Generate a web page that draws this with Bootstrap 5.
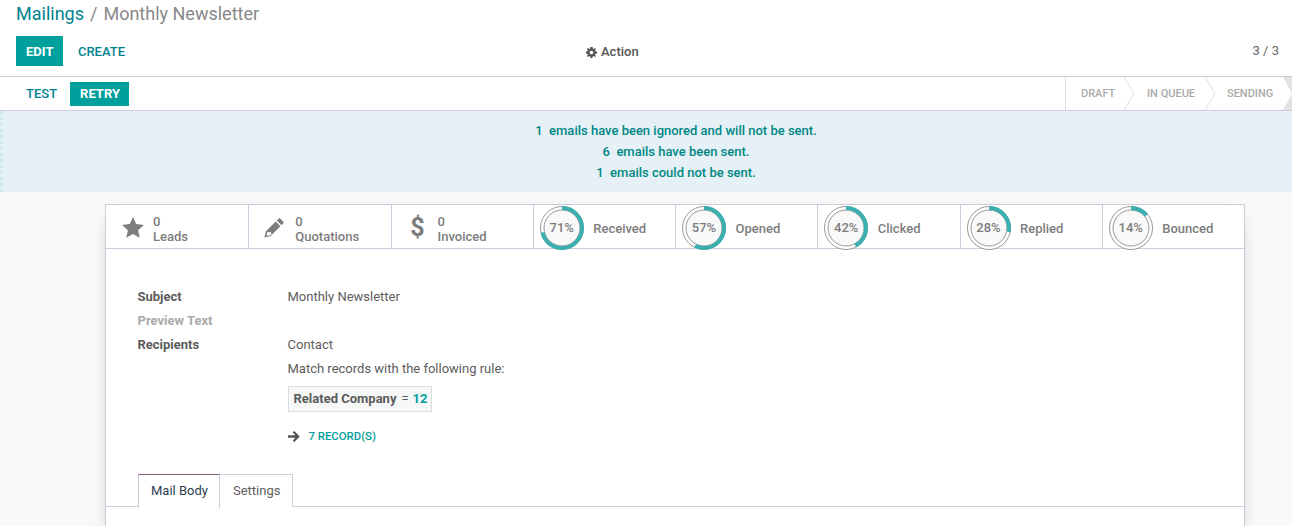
<!DOCTYPE html>
<html lang="en">
<head>
  <meta charset="UTF-8">
  <title>Monthly Newsletter</title>
  <link href="https://cdn.jsdelivr.net/npm/bootstrap@5.3.0/dist/css/bootstrap.min.css" rel="stylesheet">
  <style>
    html, body { height: 526px; overflow: hidden; }
    body { font-family: Roboto, "Liberation Sans", sans-serif; font-size: 13px; line-height: 1.5; color: #5c5c5c; background: #f9f9f9; }
    .teal { color: #00a09d; }

    .panel-top { height: 77px; background: #fff; border-bottom: 1px solid #ccc; padding: 0 13px 0 16px; }
    .crumbs { height: 36px; font-size: 18px; line-height: 28px; color: #888; }
    .crumbs a { color: #00838f; text-decoration: none; }
    .crumbs .sep { margin: 0 6px 0 6px; }
    .panel-btns { height: 30px; }
    .flat-btn { font-size: 13px; font-weight: 500; line-height: 18px; border-radius: 0; border: 0; padding: 7px 10px 5px; text-transform: uppercase; color: #00838f; background: transparent; }
    .flat-btn.on { background: #00a09d; color: #fff; font-weight: 700; }
    .flat-btn.create { padding: 7px 15px 5px 14.500px; }
    .action-slot { left: 570px; top: 7px; font-weight: 500; color: #555; line-height: 18px; }
    .pager-txt { color: #666; padding-top: 5px; }

    .status-row { height: 34px; background: #fff; border-bottom: 1px solid #ccd; padding-left: 16px; }
    .status-row .flat-btn { padding: 3px 10px; line-height: 18px; }
    .status-row .flat-btn.on { margin-left: 3px; padding: 3px 9.500px 3px 10px; }
    .steps { border-left: 1px solid #ddd; height: 33px; }
    .step { position: relative; font-size: 11px; font-weight: 500; color: #aaa; line-height: 33px; }
    .step svg { position: absolute; top: 0; }
    .step-draft { width: 81px; padding-left: 15px; }
    .step-queue { width: 80px; }
    .step-send { width: 56px; }
    .step-end { width: 9px; position: relative; }
    .step-end svg { position: absolute; left: 0; top: 0; }

    .mail-alert { height: 81px; margin: 0; padding: 9px 0 0 57px; border: 0; border-radius: 0; border-left: 3px dotted #cfe8e8; background: #e5f1f6; color: #008784; font-weight: 500; text-align: center; line-height: 21px; }

    .mail-sheet { width: 1140px; margin: 12px 0 0 105px; height: 340px; background: #fff; border: 1px solid #ccd; box-shadow: 0 5px 20px -15px #000; }
    .stat-row { height: 44px; border-bottom: 1px solid #ccd; }
    .stat-cell { width: 142.25px; flex: 0 0 auto; height: 43px; padding-top: 2px; border-left: 1px solid #ccd; color: #7d7d7d; position: relative; font-weight: 500; }
    .stat-cell:first-child { border-left-color: transparent; }
    .stat-ico { width: 46px; flex: 0 0 auto; display: flex; justify-content: center; align-items: center; color: #7d7d7d; }
    .stat-ico.star { padding-left: 6px; }
    .stat-ico.pencil { padding-left: 4px; }
    .stat-ico.dollar { padding-left: 6px; font-size: 25px; line-height: 30px; font-weight: 700; }
    .stat-txt { line-height: 15px; padding-top: 3px; }
    .ring-wrap { width: 46px; height: 46px; margin-left: 5px; position: relative; flex: 0 0 auto; }
    .ring-pct { position: absolute; inset: 0; display: flex; align-items: center; justify-content: center; font-size: 13px; font-weight: 500; color: #7d7d7d; }
    .ring-label { margin: 2px 0 0 8.500px; }

    .sheet-body { padding: 36px 32px 0 31.5px; }
    .field-row { display: flex; min-height: 24px; line-height: 24px; }
    .field-label { width: 150px; font-weight: 700; flex: 0 0 auto; }
    .field-label.muted-lbl { color: #aaa; }
    .rule-box { display: inline-block; background: #f6f7f7; border: 1px solid #d9dfe0; line-height: 24px; padding: 0 4px 0 5px; margin-top: 5px; }
    .rule-op { margin: 0 4px 0 5px; }
    .rec-link { margin-top: 12px; height: 20px; line-height: 20px; }
    .rec-link span { font-size: 11.375px; font-weight: 500; color: #00a09d; margin-left: 9px; }

    .mail-tabs { margin: 26px -32px 0 -31.5px; padding-left: 32px; border-bottom: 1px solid #ccd; height: 33px; }
    .mail-tabs .nav-link { height: 33px; padding: 6px 12px; font-size: 13px; line-height: 20px; color: #5c5c5c; border: 1px solid #ccd; border-radius: 0; border-bottom: 0; margin: 0; background: #fff; }
    .mail-tabs .nav-link.active { color: #2c3e50; border-top-color: #875a7b; position: relative; padding: 6px 11px 7px 12px; height: 34px; }
    .mail-tabs .nav-item + .nav-item .nav-link { border-left: 0; padding-left: 13px; }
  </style>
</head>
<body>

<!-- Control panel -->
<div class="panel-top position-relative">
  <div class="crumbs"><a href="#">Mailings</a><span class="sep">/</span>Monthly Newsletter</div>
  <div class="panel-btns d-flex justify-content-between position-relative">
    <div class="d-flex">
      <button class="btn flat-btn on">Edit</button>
      <button class="btn flat-btn create">Create</button>
    </div>
    <div class="position-absolute action-slot d-flex align-items-center gap-1">
      <svg width="11" height="11" viewBox="0 0 24 24"><path fill="#555" fill-rule="evenodd" d="M9.600 0h4.800l.6 3.400 2.200.9L19.600 2.300 21.700 4.400 19.700 7.200l.9 2.200 3.400.6v4l-3.400.6-.9 2.200 2 2.800-2.100 2.100-2.800-2-2.200.9-.6 3.400H9.600L9 20.600l-2.200-.9-2.800 2L1.900 19.600l2-2.800-.9-2.200L0 14v-4l3-.6.9-2.200-2-2.800L4 2.300l2.800 2 2.200-.9zM12 8a4 4 0 1 0 0 8 4 4 0 0 0 0-8z"/></svg>
      Action
    </div>
    <div class="pager-txt">3 / 3</div>
  </div>
</div>

<!-- Status bar -->
<div class="status-row d-flex justify-content-between">
  <div class="d-flex align-items-center">
    <button class="btn flat-btn">Test</button>
    <button class="btn flat-btn on">Retry</button>
  </div>
  <div class="steps d-flex">
    <div class="step step-draft">DRAFT
      <svg style="left:58px" width="11" height="33"><path d="M0 0l10 16.500L0 33" fill="none" stroke="#e0e0e0"/></svg>
    </div>
    <div class="step step-queue">IN QUEUE
      <svg style="left:58px" width="11" height="33"><path d="M0 0l10 16.500L0 33" fill="none" stroke="#e0e0e0"/></svg>
    </div>
    <div class="step step-send">SENDING</div>
    <div class="step-end">
      <svg width="9" height="33"><path d="M0 0h9v33H0l9-16.500z" fill="#e2e2e2"/></svg>
    </div>
  </div>
</div>

<!-- Statistics alert -->
<div class="alert mail-alert" role="alert">
  <div>1&nbsp; emails have been ignored and will not be sent.</div>
  <div>6&nbsp; emails have been sent.</div>
  <div>1&nbsp; emails could not be sent.</div>
</div>

<!-- Sheet -->
<div class="mail-sheet">
  <div class="stat-row d-flex">
    <div class="stat-cell d-flex align-items-center">
      <div class="stat-ico star"><svg width="22" height="21" viewBox="0 0 24 23"><path fill="#7d7d7d" d="M12 0l3.500 7.800 8.500.9-6.400 5.700 1.800 8.400L12 18.500l-7.400 4.300 1.800-8.400L0 8.700l8.500-.9z"/></svg></div>
      <div class="stat-txt">0<br>Leads</div>
    </div>
    <div class="stat-cell d-flex align-items-center">
      <div class="stat-ico pencil"><svg width="20" height="20" viewBox="0 0 21 21"><path fill="#7d7d7d" d="M15.500.6a1 1 0 0 1 1.400 0l3.500 3.500a1 1 0 0 1 0 1.400l-2 2L13.500 2.600zM12.300 3.800l4.900 4.900L7 19 .5 20.500 2 14zM3.600 14.500l-.9 3.800 1.600 0.400 3.500-1.100-.3-2.500z"/></svg></div>
      <div class="stat-txt">0<br>Quotations</div>
    </div>
    <div class="stat-cell d-flex align-items-center">
      <div class="stat-ico dollar">$</div>
      <div class="stat-txt">0<br>Invoiced</div>
    </div>
    <div class="stat-cell d-flex align-items-center" data-pct="71"></div>
    <div class="stat-cell d-flex align-items-center" data-pct="57"></div>
    <div class="stat-cell d-flex align-items-center" data-pct="42"></div>
    <div class="stat-cell d-flex align-items-center" data-pct="28"></div>
    <div class="stat-cell d-flex align-items-center" data-pct="14"></div>
  </div>

  <div class="sheet-body">
    <div class="field-row"><div class="field-label">Subject</div><div>Monthly Newsletter</div></div>
    <div class="field-row"><div class="field-label muted-lbl">Preview Text</div><div></div></div>
    <div class="field-row"><div class="field-label">Recipients</div><div>Contact</div></div>
    <div class="field-row"><div class="field-label"></div><div>Match records with the following rule:</div></div>
    <div class="field-row"><div class="field-label"></div>
      <div><div class="rule-box"><b>Related Company</b><span class="rule-op">=</span><b class="teal fw-bold">12</b></div></div>
    </div>
    <div class="field-row rec-link"><div class="field-label"></div>
      <div class="d-flex align-items-center">
        <svg width="12" height="11" viewBox="0 0 12 11"><path fill="#555" d="M6.300 0l5.500 5.500L6.300 11 4.700 9.400l2.700-2.700H0V4.300h7.400L4.700 1.600z"/></svg>
        <span>7 RECORD(S)</span>
      </div>
    </div>

    <ul class="nav mail-tabs">
      <li class="nav-item"><a class="nav-link active" href="#">Mail Body</a></li>
      <li class="nav-item"><a class="nav-link" href="#">Settings</a></li>
    </ul>
  </div>
</div>

<script>
  // progress rings, arc length comes from the percentage
  var labels = { 71: 'Received', 57: 'Opened', 42: 'Clicked', 28: 'Replied', 14: 'Bounced' };
  document.querySelectorAll('[data-pct]').forEach(function (cell) {
    var pct = +cell.dataset.pct;
    var c = 2 * Math.PI * 20;
    cell.innerHTML =
      '<div class="ring-wrap"><svg width="46" height="46" viewBox="0 0 46 46">' +
      '<circle cx="23" cy="23" r="21.5" fill="#fff" stroke="#999" stroke-width="1"/>' +
      '<circle cx="23" cy="23" r="18" fill="#f9f9f9" stroke="#999" stroke-width="1"/>' +
      '<circle cx="23" cy="23" r="20" fill="none" stroke="#39afb0" stroke-width="4" ' +
      'stroke-dasharray="' + (c * pct / 100) + ' ' + c + '" transform="rotate(-90 23 23)"/>' +
      '</svg><div class="ring-pct">' + pct + '%</div></div>' +
      '<div class="ring-label">' + labels[pct] + '</div>';
  });
</script>
<script src="https://cdn.jsdelivr.net/npm/bootstrap@5.3.0/dist/js/bootstrap.bundle.min.js"></script>
</body>
</html>
